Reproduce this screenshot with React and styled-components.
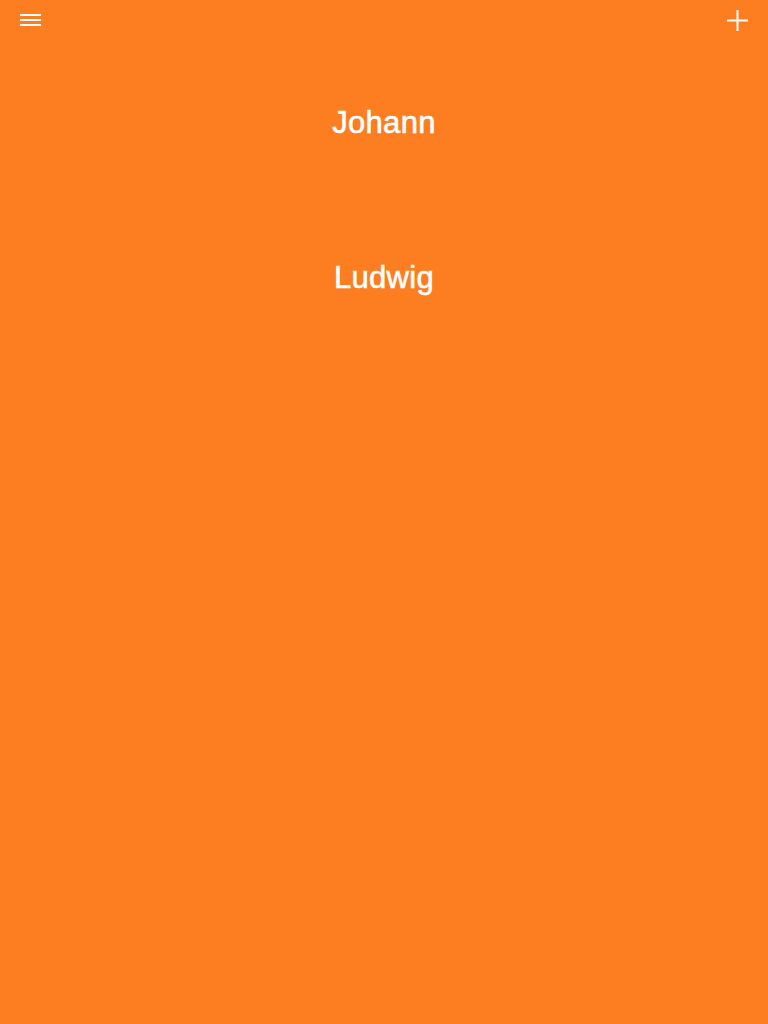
import styled, { createGlobalStyle } from 'styled-components';

const Global = createGlobalStyle`
  html, body { margin: 0; padding: 0; background: #fc7e21; }
  body { font-family: "Liberation Sans", Arial, sans-serif; }
`;

const Screen = styled.div`
  width: 768px;
  height: 1024px;
  background: #fc7e21;
  color: #fff;
  display: flex;
  flex-direction: column;
`;

const TopBar = styled.header`
  height: 45px;
  display: flex;
  align-items: flex-start;
  justify-content: space-between;
  padding: 0 20px;
`;

const IconButton = styled.button`
  border: 0;
  background: none;
  padding: 0;
  margin-top: ${p => p.$top}px;
  color: #fff;
  cursor: pointer;
  display: block;
  svg { display: block; }
`;

const List = styled.ul`
  list-style: none;
  margin: 0;
  padding: 0;
`;

const NameRow = styled.li`
  height: 155px;
  display: flex;
  align-items: center;
  justify-content: center;
  font-size: 31px;
  font-weight: 400;
  letter-spacing: 0.3px;
  -webkit-text-stroke: 0.6px #fff;
`;

const names = ['Johann', 'Ludwig'];

export default function App() {
  return (
    <Screen>
      <Global />
      <TopBar>
        <IconButton $top={14} aria-label="Menu">
          <svg width="21" height="12" viewBox="0 0 21 12" fill="#fff">
            <rect x="0" y="0" width="21" height="2" />
            <rect x="0" y="5" width="21" height="2" />
            <rect x="0" y="10" width="21" height="2" />
          </svg>
        </IconButton>
        <IconButton $top={10} aria-label="Add">
          <svg width="21" height="21" viewBox="0 0 21 21" fill="#fff">
            <rect x="9.5" y="0" width="2" height="21" />
            <rect x="0" y="9.5" width="21" height="2" />
          </svg>
        </IconButton>
      </TopBar>
      <List>
        {names.map(n => (
          <NameRow key={n}>{n}</NameRow>
        ))}
      </List>
    </Screen>
  );
}
